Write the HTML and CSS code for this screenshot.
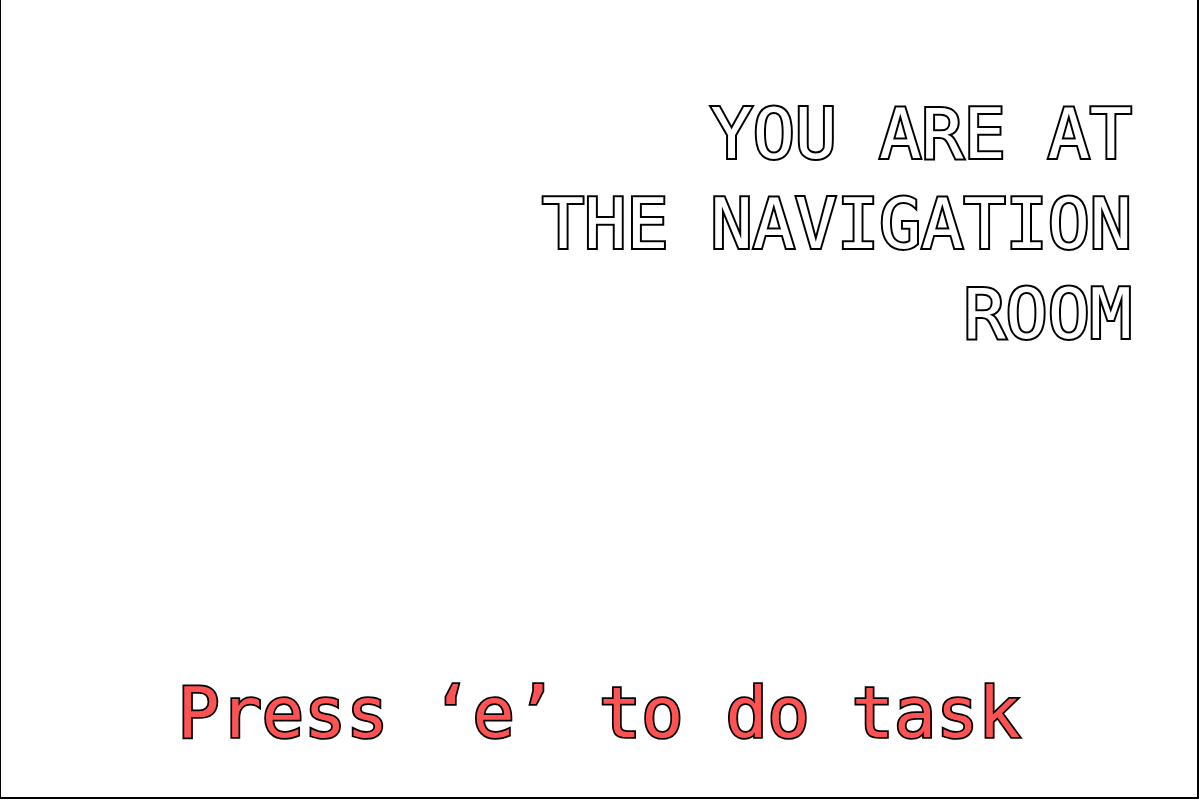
FILE: index.html
```html
<!DOCTYPE html>
<html lang="en">
<head>
<meta charset="utf-8">
<title>Navigation Room</title>
<link rel="stylesheet" href="styles.css">
</head>
<body>
<div class="frame">
  <h1 class="location">YOU ARE AT<br>THE NAVIGATION<br>ROOM</h1>
  <p class="prompt">Press ‘e’ to do task</p>
</div>
</body>
</html>
```
FILE: styles.css
```css
html, body {
  margin: 0;
  padding: 0;
  background: #ffffff;
}
.frame {
  box-sizing: border-box;
  width: 1199px;
  height: 799px;
  border-left: 1px solid #000;
  border-right: 2px solid #000;
  border-bottom: 2px solid #000;
  display: flex;
  flex-direction: column;
  justify-content: space-between;
  font-family: "DejaVu Sans Mono", monospace;
}
.location {
  margin: 0;
  padding: 89px 65px 0 0;
  text-align: right;
  font-size: 70px;
  font-weight: normal;
  line-height: 90px;
  color: #ffffff;
  -webkit-text-stroke: 4px #000;
  paint-order: stroke fill;
}
.prompt {
  margin: 0 0 39px;
  text-align: center;
  font-size: 70px;
  font-weight: normal;
  line-height: 90px;
  color: #ff5353;
  -webkit-text-stroke: 3.5px #000;
  paint-order: stroke fill;
  text-shadow: 1px 1px 1px rgba(0,0,0,0.35);
}
```
